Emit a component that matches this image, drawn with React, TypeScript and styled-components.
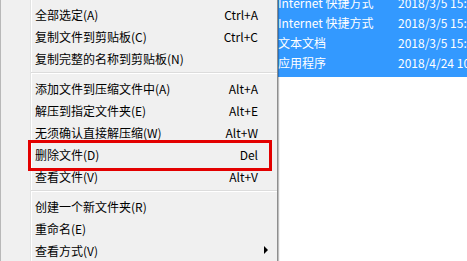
import styled, { createGlobalStyle } from 'styled-components'

// Context menu (WinRAR shell extension) over a selected Explorer file list.
const items: Array<{ label: string; key?: string; sub?: boolean; marked?: boolean } | 'sep'> = [
  { label: '全部选定(A)', key: 'Ctrl+A' },
  { label: '复制文件到剪贴板(C)', key: 'Ctrl+C' },
  { label: '复制完整的名称到剪贴板(N)' },
  'sep',
  { label: '添加文件到压缩文件中(A)', key: 'Alt+A' },
  { label: '解压到指定文件夹(E)', key: 'Alt+E' },
  { label: '无须确认直接解压缩(W)', key: 'Alt+W' },
  { label: '删除文件(D)', key: 'Del', marked: true },
  { label: '查看文件(V)', key: 'Alt+V' },
  'sep',
  { label: '创建一个新文件夹(R)' },
  { label: '重命名(E)' },
  { label: '查看方式(V)', sub: true },
]

const files = [
  { name: 'Internet 快捷方式', date: '2018/3/5 15:32' },
  { name: 'Internet 快捷方式', date: '2018/3/5 15:32' },
  { name: '文本文档', date: '2018/3/5 15:40' },
  { name: '应用程序', date: '2018/4/24 10:12' },
]

export default function App() {
  return (
    <>
      <GlobalStyle />
      <Screen>
        <Menu>
          {items.map((it, i) =>
            it === 'sep' ? (
              <Separator key={i} />
            ) : (
              <Item key={i} $marked={it.marked}>
                <Label>{it.label}</Label>
                <Shortcut>{it.key}</Shortcut>
                <ArrowCell>{it.sub && <Arrow />}</ArrowCell>
              </Item>
            )
          )}
        </Menu>
        <Pane>
          <Selection>
            {files.map((f, i) => (
              <FileRow key={i}>
                <FileName>{f.name}</FileName>
                <FileDate>{f.date}</FileDate>
              </FileRow>
            ))}
          </Selection>
        </Pane>
      </Screen>
    </>
  )
}

const GlobalStyle = createGlobalStyle`
  html, body {
    margin: 0;
    padding: 0;
    background: #fff;
  }
  body {
    font-family: "Noto Sans CJK SC", "Noto Sans", sans-serif;
    font-size: 12px;
    color: #000;
  }
`

const Screen = styled.div`
  display: flex;
  width: 467px;
  height: 261px;
  overflow: hidden;
`

const Menu = styled.div`
  position: relative;
  z-index: 1;
  flex: 0 0 278px;
  box-sizing: border-box;
  height: 261px;
  padding-top: 3px;
  background-color: #f0f0f0;
  background-image: linear-gradient(
    to right,
    transparent 29px,
    #e2e3e3 29px,
    #e2e3e3 30px,
    #ffffff 30px,
    #ffffff 31px,
    transparent 31px
  );
  border-left: 1px solid #b8b8b8;
  border-right: 1px solid #8e8e8e;
  box-shadow: 1px 0 1px rgba(0, 0, 0, 0.25);
`

const Item = styled.div<{ $marked?: boolean }>`
  position: relative;
  display: grid;
  grid-template-columns: 1fr auto 19px;
  align-items: center;
  height: 22px;
  padding-left: 34px;
  white-space: nowrap;

  ${({ $marked }) =>
    $marked &&
    `
    &::after {
      content: '';
      position: absolute;
      left: 27px;
      right: 5px;
      top: -3px;
      bottom: -6px;
      border: 3px solid #e30000;
    }
  `}
`

const Label = styled.span`
  overflow: hidden;
`

const Shortcut = styled.span`
  text-align: right;
`

const ArrowCell = styled.span`
  display: flex;
  align-items: center;
  padding-left: 6px;
`

const Arrow = styled.span`
  width: 0;
  height: 0;
  border-left: 4px solid #000;
  border-top: 4px solid transparent;
  border-bottom: 4px solid transparent;
`

const Separator = styled.div`
  height: 8px;
  margin-left: 30px;
  background: linear-gradient(
    to bottom,
    transparent 3px,
    #dcdcdc 3px,
    #dcdcdc 4px,
    #ffffff 4px,
    #ffffff 5px,
    transparent 5px
  );
`

const Pane = styled.div`
  flex: 1;
  min-width: 0;
  background: #fff;
`

const Selection = styled.div`
  margin-top: -7px;
  padding-bottom: 4px;
  background: #3399ff;
  color: #fff;
`

const FileRow = styled.div`
  display: flex;
  height: 20px;
  line-height: 20px;
  white-space: nowrap;
`

const FileName = styled.span`
  flex: 0 0 120px;
  overflow: hidden;
`

const FileDate = styled.span`
  flex: 1;
`
